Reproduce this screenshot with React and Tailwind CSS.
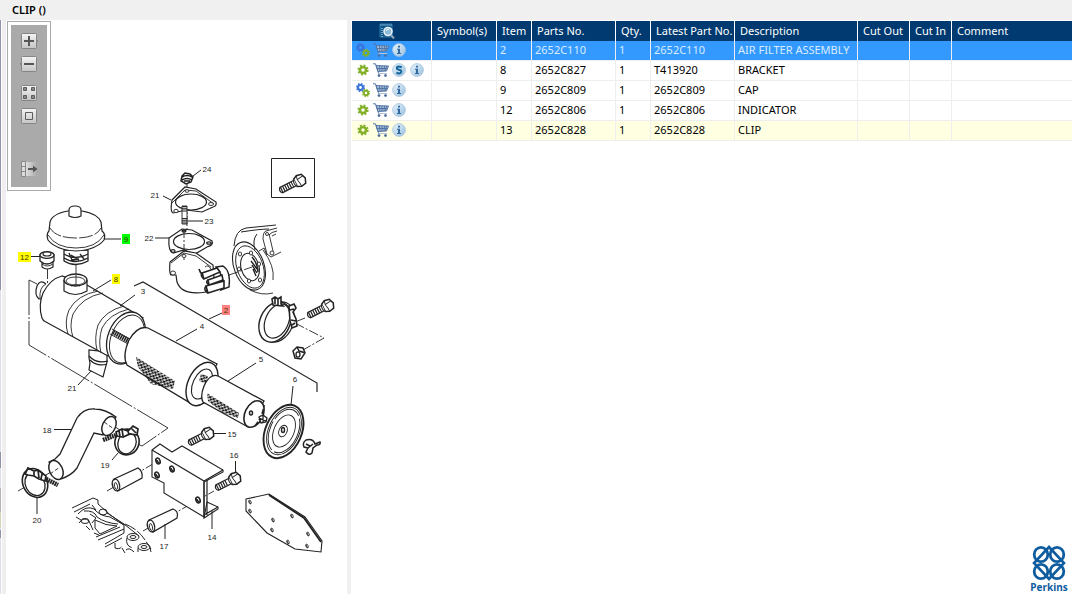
import { useState } from "react";
import clsx from "clsx";

const parts = [
  { item: "2", partNo: "2652C110", qty: 1, latest: "2652C110", description: "AIR FILTER ASSEMBLY", assembly: true },
  { item: "8", partNo: "2652C827", qty: 1, latest: "T413920", description: "BRACKET", superseded: true },
  { item: "9", partNo: "2652C809", qty: 1, latest: "2652C809", description: "CAP", assembly: true },
  { item: "12", partNo: "2652C806", qty: 1, latest: "2652C806", description: "INDICATOR" },
  { item: "13", partNo: "2652C828", qty: 1, latest: "2652C828", description: "CLIP", marked: true },
];

const headings = ["Symbol(s)", "Item", "Parts No.", "Qty.", "Latest Part No.", "Description", "Cut Out", "Cut In", "Comment"];

const Cog = ({ x, y, r, color }) => (
  <g fill="none" stroke={color}>
    <circle cx={x} cy={y} r={r * 0.65} strokeWidth={r * 0.55} />
    <circle cx={x} cy={y} r={r} strokeWidth={r * 0.4} strokeDasharray={`${r * 0.4} ${r * 0.385}`} />
  </g>
);

const GearIcon = ({ assembly }) => (
  <svg width="14" height="14" viewBox="0 0 14 14" aria-hidden="true">
    {assembly ? (
      <>
        <Cog x={4.5} y={4.5} r={3.8} color="#3b73d8" />
        <Cog x={10} y={10} r={3.4} color="#83b027" />
      </>
    ) : (
      <Cog x={7} y={7} r={4.7} color="#83b027" />
    )}
  </svg>
);

const CartIcon = () => (
  <svg width="16" height="14" viewBox="0 0 16 14" fill="none" stroke="#5577a6" aria-hidden="true">
    <path d="M3 2.5 15.5 3 13.5 8 5 8.5Z" fill="#a9bedb" />
    <path d="M0 .8H2.5L5.6 10.5H14M4 5.5H14.5M6.5 3 7 8M9 3V8M11.5 3 11 8M13.5 3 12.5 8" />
    <path d="M5.5 10.5H14" stroke="#b4c3d9" />
    <circle cx="6" cy="12.5" r="1" fill="#41618f" />
    <circle cx="12.5" cy="12.5" r="1" fill="#41618f" />
  </svg>
);

const RoundIcon = ({ kind }) => (
  <svg width="14" height="14" viewBox="0 0 14 14" aria-hidden="true">
    <defs>
      <linearGradient id={`round-${kind}`} x1="0" y1="0" x2="1" y2="1">
        <stop offset="0" stopColor="#eaf5fc" />
        <stop offset="1" stopColor="#97bfdf" />
      </linearGradient>
    </defs>
    <circle cx="7" cy="7" r="6.4" fill={`url(#round-${kind})`} stroke="#a5c3dc" strokeWidth=".8" />
    {kind === "info" ? (
      <path d="M6 2.8H8V4.5H6ZM5 5.8H8V10H9V11H5V10H6V6.8H5Z" fill="#34699f" />
    ) : (
      <path d="M9.7 4.3Q5 2.4 4.8 4.8Q4.8 6.4 7 6.8Q9.4 7.2 9.2 8.9Q8.8 11.3 4.4 9.8" fill="none" stroke="#12649a" strokeWidth="2" />
    )}
  </svg>
);

const ViewIcon = () => (
  <svg width="16" height="16" viewBox="0 0 16 16" fill="none" aria-hidden="true">
    <path d="M1 1H13V14H1Z" fill="#0d5488" stroke="#2f78aa" />
    <path d="M1 2H13" stroke="#6ca6cc" />
    <path d="M3 5V14" stroke="#d6eaf5" strokeDasharray="1 1" />
    <circle cx="9" cy="8.5" r="4" fill="#8dbad7" stroke="#e9f2f8" strokeWidth="1.6" />
    <path d="M7 8Q8 6 10 6.5" stroke="#fff" />
    <path d="m12 12 3 3.5" stroke="#8fa6ba" strokeWidth="2" />
  </svg>
);

const ToolIcon = ({ kind }) => (
  <svg width="20" height="16" viewBox="0 0 20 16" fill="none" aria-hidden="true">
    <defs>
      <linearGradient id="tool-face" x1="0" y1="0" x2="0" y2="1">
        <stop offset="0" stopColor="#f5f5f5" />
        <stop offset="1" stopColor="#c4c4c4" />
      </linearGradient>
      <linearGradient id="tool-fade">
        <stop offset="0" stopColor="#f4f4f4" />
        <stop offset="1" stopColor="#aaa" />
      </linearGradient>
    </defs>
    {kind === "zoomIn" && <path d="m17 6 2 2-2 2" fill="#ddd" stroke="#888" />}
    {kind === "zoomOut" && <path d="M3 6 1 8l2 2" fill="#ddd" stroke="#888" />}
    {kind !== "panel" && <rect x="2.5" y=".5" width="15" height="15" rx="1" fill="url(#tool-face)" stroke="#858585" />}
    {kind === "zoomIn" && <path d="M5 8H15M10 3V13" stroke="#555" strokeWidth="2" />}
    {kind === "zoomOut" && <path d="M5 8H15" stroke="#555" strokeWidth="2" />}
    {kind === "tiles" && <path d="M4.5 2.5H7.5V5.5H4.5ZM12.5 2.5H15.5V5.5H12.5ZM4.5 10.5H7.5V13.5H4.5ZM12.5 10.5H15.5V13.5H12.5Z" fill="#888" stroke="#5c5c5c" />}
    {kind === "fit" && <path d="M6.5 4.5H13.5V11.5H6.5Z" stroke="#5c5c5c" />}
    {kind === "panel" && (
      <>
        <path d="M2 1H18V15H2Z" fill="url(#tool-fade)" />
        <path d="M2.5 .5H6.5V15.5H2.5ZM2.5 5.5H6.5M2.5 10.5H6.5" fill="#ddd" stroke="#888" />
        <path d="M9 8H15" stroke="#555" strokeWidth="2" />
        <path d="M14 4.5 18.500 8 14 11.500Z" fill="#555" />
      </>
    )}
  </svg>
);

const Tool = ({ kind, label }) => (
  <button type="button" title={label} aria-label={label} className="block h-4 w-5 cursor-pointer">
    <ToolIcon kind={kind} />
  </button>
);

const Toolbar = () => (
  <div className="absolute top-0 left-0 mt-px ml-px border border-[#aaaaaa] bg-white p-[3px]">
    <div className="flex h-[162px] w-9 flex-col items-center bg-[#aaaaaa] pt-2">
      <div className="flex flex-col gap-[7px]">
        <Tool kind="zoomIn" label="Zoom in" />
        <Tool kind="zoomOut" label="Zoom out" />
      </div>
      <div className="mt-[13px] flex flex-col gap-[7px]">
        <Tool kind="tiles" label="Tile view" />
        <Tool kind="fit" label="Fit to window" />
      </div>
      <div className="mt-auto mb-[10px]">
        <Tool kind="panel" label="Toggle list" />
      </div>
    </div>
  </div>
);

// Hex bolt lying along the x axis, head at the origin
const Bolt = ({ x, y, length, angle }) => (
  <g transform={`translate(${x} ${y}) rotate(${angle})`}>
    <path d={`M-3 -3H-${length}Q-${length + 3} 0 -${length} 3H-3Z`} strokeWidth="1.2" />
    <path d={`M-${length} 0H-7`} strokeWidth="6" strokeDasharray="1.2 1.2" />
    <path d="M-4 -4 0 -6 5 -5 7 0 5 5 0 6 -4 4Z" strokeWidth="1.5" />
    <path d="M-4 -4Q-7 0 -4 4M0 -6 -1 -2 0 3V6M-1 -2 6 -3" />
  </g>
);

const Hole = ({ x, y, r = 2 }) => (
  <g>
    <ellipse cx={x} cy={y} rx={r} ry={r + 1} transform={`rotate(-20 ${x} ${y})`} />
    <path d={`M${x - 1} ${y - 1}Q${x - 1} ${y + 1} ${x + 1} ${y + 2}`} />
  </g>
);

const callouts = [
  ["24", 207, 172], ["21", 155, 198], ["23", 209, 224], ["22", 149, 241], ["3", 143, 294],
  ["4", 202, 329], ["5", 261, 362], ["6", 295, 382], ["21", 72, 391], ["18", 47, 433],
  ["19", 105, 468], ["20", 37, 523], ["15", 232, 437], ["16", 234, 458], ["14", 212, 540], ["17", 164, 549],
];

const hotspots = [
  { label: "9", x: 122, y: 234, w: 8, fill: "#00ff00" },
  { label: "12", x: 18, y: 252, w: 13, fill: "#ffff00" },
  { label: "8", x: 112, y: 274, w: 8, fill: "#ffff00" },
  { label: "2", x: 222, y: 305, w: 8, fill: "#ff8080" },
];

const Diagram = () => (
  <svg viewBox="6 20 341 540" className="block w-full" fill="#fff" stroke="#222" strokeWidth=".9" role="img" aria-label="Air filter exploded view">
    <defs>
      <pattern id="mesh" width="4" height="4" patternUnits="userSpaceOnUse" patternTransform="rotate(28)">
        <path d="M0 0 4 4M4 0 0 4" stroke="#111" strokeWidth="1.2" />
      </pattern>
    </defs>

    {/* assembly lines */}
    <g fill="none">
      <path d="M134 286 143 282 317 383V392" strokeWidth="1.2" />
      <path d="M37 284 29 280V345L168 428 142 446 122 437" strokeDasharray="44 2 2 2" />
      <path d="M187 184V265M76 265V282M47.5 269V283" strokeDasharray="10 2 2 2" />
      <path d="M229 275 252 267M295 323 324 338 303 350M305 318 295 322" strokeDasharray="10 2 2 2" />
      <path d="M18 491 65 464M102 419 125 433M107 491 158 461M143 531 198 500 214 491" strokeDasharray="9 2 2 2" />
    </g>

    {/* cap */}
    <path d="M64 250V261Q75 268 88 261V250Z" strokeWidth="1.3" />
    <path d="M64 254Q75 261 88 254M64 258Q75 265 88 258M71 255 79 260M80 254 84 259M69 253 72 260 79 259" strokeWidth="1.3" fill="none" />
    <path d="M68 211Q52 214 50 222L49 231Q46 234 48 240Q56 250 76 251Q96 250 104 240Q106 234 102 231L101 222Q98 214 82 211Z" strokeWidth="1.2" />
    <path d="M48 235Q56 248 76 248Q96 248 104 235" fill="none" />
    <path d="M50 228Q56 238 76 238Q96 238 101 228" fill="none" strokeDasharray="14 2" />
    <path d="M69 216V210Q69 206 75 206Q81 206 81 210V216Q75 219 69 216Z" strokeWidth="1.2" />

    {/* indicator */}
    <path d="M42 259V267Q47 271 53 267V259" strokeWidth="1.2" />
    <path d="M42 264Q47 268 53 264" fill="none" />
    <path d="M40 254V261Q47 267 54 261V254" strokeWidth="1.3" />
    <ellipse cx="47" cy="255" rx="7" ry="3.4" strokeWidth="1.2" />
    <ellipse cx="47" cy="254" rx="4" ry="2" strokeWidth="1.2" />

    {/* canister */}
    <path d="M46 284Q40 279 37 286Q34 295 39 299L43 299" strokeWidth="1.2" />
    <path d="M46 284Q39 287 40 299" />
    <path d="M89 350V358L90 363 89 370 103 377 107 362V352Z" strokeWidth="1.2" />
    <path d="M89 356Q96 364 108 361M90 360Q97 367 107 364" fill="none" strokeWidth="1.2" />
    <path d="M62 276Q50 279 43 293Q38 305 42 318Q43 321 46 322L108 356 143 318 87 285Z" strokeWidth="1.2" />
    <path d="M98 291Q77 295 69 310Q64 322 68 334M103 293Q82 297 73 314Q69 326 73 337" fill="none" />
    <path d="M124 306Q105 311 98 325Q94 338 97 350M129 309Q109 314 102 328Q98 341 101 353" fill="none" />
    <ellipse cx="126" cy="338" rx="18" ry="27" transform="rotate(22 126 338)" strokeWidth="1.3" />
    <ellipse cx="127" cy="339" rx="16" ry="25" transform="rotate(22 127 339)" />
    <path d="M113 332 129 341" strokeWidth="5" strokeDasharray="1.6 .6" />
    <path d="M112 329 130 339M110 334 128 344" fill="none" />
    <path d="M64 280V291Q75 298 87 291V280" strokeWidth="1.2" />
    <ellipse cx="75.5" cy="280" rx="11.5" ry="6" strokeWidth="1.3" />
    <ellipse cx="75.5" cy="281" rx="9.5" ry="4" />
    <path d="M71 286Q76 283 80 286M76 275V284" fill="none" />

    {/* outer element */}
    <path d="M148 328Q138 325 129 340Q122 356 127 365L192 404 217 364Z" strokeWidth="1.3" />
    <ellipse cx="202" cy="384" rx="14" ry="23" transform="rotate(25 202 384)" strokeWidth="1.4" />
    <ellipse cx="202" cy="384" rx="9" ry="16" transform="rotate(25 202 384)" strokeWidth="1.1" />
    <path d="M201 374 208 376 206 384 199 381Z" fill="url(#mesh)" stroke="none" />
    <path d="M136 357 175 381 173 389 151 384 138 367Z" fill="url(#mesh)" stroke="none" />

    {/* inner element */}
    <path d="M218 376Q210 373 204 386Q200 396 203 402L248 427 264 401Z" strokeWidth="1.3" />
    <ellipse cx="254" cy="414" rx="9" ry="14" transform="rotate(25 254 414)" strokeWidth="1.6" />
    <path d="M255 426Q263 416 264 405" fill="none" strokeWidth="1.6" strokeDasharray="5 2" />
    <ellipse cx="251" cy="413" rx="1.5" ry="2" strokeWidth="1.5" />
    <path d="M207 393 239 413 238 418 223 413 208 401Z" fill="url(#mesh)" stroke="none" />
    <path d="M259 417 263 415 267 418 266 422 261 423ZM263 415V423M259 418 266 421" strokeWidth="1.3" />

    {/* cover */}
    <ellipse cx="283.5" cy="431.5" rx="18" ry="28" transform="rotate(24 283.5 431.5)" strokeWidth="1.9" />
    <ellipse cx="284" cy="431" rx="15.5" ry="25" transform="rotate(24 284 431)" />
    <ellipse cx="284" cy="431" rx="14" ry="23" transform="rotate(24 284 431)" strokeDasharray="30 3" />
    <ellipse cx="284" cy="431" rx="10" ry="17" transform="rotate(24 284 431)" />
    <ellipse cx="283" cy="431" rx="4" ry="6" transform="rotate(24 283 431)" />
    <ellipse cx="283" cy="430" rx="1.5" ry="2.5" strokeWidth="1.4" />
    <path d="M306 440Q302 443 304 447L308 448 306 452Q309 456 312 453L313 448 317 445Q321 445 320 442L315 444Q313 438 306 440ZM308 448 313 444M306 444 310 446" strokeWidth="1.5" />

    {/* band clamp with bolt and nut */}
    <ellipse cx="278" cy="322" rx="15" ry="21" transform="rotate(24 278 322)" strokeWidth="1.2" />
    <ellipse cx="275" cy="322" rx="15" ry="21" transform="rotate(24 275 322)" strokeWidth="1.4" />
    <ellipse cx="277" cy="321" rx="11.5" ry="18" transform="rotate(24 277 321)" strokeWidth="1.2" />
    <path d="M272 299 275 297 278 299 281 297V304L283 306 273 305ZM275 297V304M278 299V305" strokeWidth="1.6" />
    <path d="M289 306 294 304 296 308 293 312 296 319 297 326 292 328 290 321ZM290 310 294 309M291 320 296 321M292 325 295 323" strokeWidth="1.6" />
    <Bolt x={327} y={306} length={20} angle={-27} />
    <path d="M293 351 297 347 303 348 305 353 301 359 295 358ZM297 347 299 351 305 353M299 351 303 352" strokeWidth="1.5" />
    <ellipse cx="298" cy="354.5" rx="2" ry="2.6" strokeWidth="1.3" />

    {/* gaskets, stud and nut */}
    <path d="M172 200 185 187 196 189 216 202Q217 206 213 207L202 212 186 210 173 213Q170 212 172 200Z" strokeWidth="1.2" />
    <path d="M172 203 185 190 196 191 214 204" fill="none" />
    <ellipse cx="191" cy="202" rx="15.5" ry="8" strokeWidth="1.2" />
    <ellipse cx="187" cy="191" rx="2" ry="1.3" />
    <ellipse cx="211" cy="204" rx="2.5" ry="1.5" />
    <ellipse cx="176" cy="211" rx="2.2" ry="1.7" />
    <path d="M182 176 185 173 190 174 193 177 191 182 186 184 181 181ZM182 177Q187 174 192 177M182 180Q187 177 192 180M184 181H190" strokeWidth="1.5" />
    <path d="M182 206H187V224H182Z" />
    <path d="M184.5 206V212M184.5 218V224" strokeWidth="5" strokeDasharray="1.2 1" />
    <path d="M169 238 182 229 192 230 212 241Q214 245 207 247L195 254 184 250 173 253Q168 251 169 238Z" strokeWidth="1.2" />
    <ellipse cx="189" cy="241.5" rx="15.5" ry="8" strokeWidth="1.2" />
    <ellipse cx="184" cy="231" rx="2" ry="1" strokeWidth="1.3" />
    <ellipse cx="209" cy="243" rx="2.2" ry="1.2" strokeWidth="1.3" />
    <ellipse cx="173" cy="251" rx="2" ry="1.3" strokeWidth="1.3" />

    {/* elbow */}
    <path d="M170 262 184 251 196 253 213 265 214 278 206 292Q182 296 177 282L176 275 171 275Q169 273 170 262Z" strokeWidth="1.2" />
    <path d="M171 263 184 253 196 256 211 267" fill="none" />
    <path d="M184 230V260" fill="none" strokeDasharray="8 2 2 2" />
    <ellipse cx="184" cy="256" rx="2" ry="1.5" />
    <ellipse cx="173" cy="273" rx="2.5" ry="2" />
    <path d="M205 267Q208 264 211 269" fill="none" />
    <path d="M216 267 223 266Q231 271 229 287L221 290Q226 279 216 267Z" strokeWidth="1.4" />
    <path d="M202 273 217 268 220 272 204 279ZM208 280 222 275 223 280 209 285ZM206 286 224 281 224 288 208 293Z" strokeWidth="1.6" />
    <path d="M199 269Q200 273 203 275M202 273Q200 276 204 279M208 280Q205 282 209 285M206 286Q203 290 208 293" fill="none" strokeWidth="1.6" />

    {/* pump housing */}
    <g fill="none">
      <path d="M234 246Q235 230 246 228L276 225M241 232Q260 229 269 229M257 234Q252 240 255 250" strokeWidth="1" />
      <path d="M277 228 266 231Q263 232 263 239L267 254 271 257 281 252M269 234 273 251M269 235Q271 232 277 231M272 236 276 234" />
      <ellipse cx="249" cy="266" rx="15" ry="25" transform="rotate(-20 249 266)" strokeWidth="1.1" />
      <ellipse cx="250" cy="267" rx="13" ry="22" transform="rotate(-20 250 267)" />
      <ellipse cx="250" cy="267" rx="9" ry="14" transform="rotate(-15 250 267)" strokeWidth="1.1" />
      <path d="M252 257Q258 264 258 272M251 261 257 269M252 265 257 273M253 269 256 276" strokeWidth="1.4" />
      <path d="M263 250Q275 266 273 280M259 251 264 248 267 255M250 290Q262 296 273 293" />
    </g>
    {[[240, 254], [251, 253], [259, 264], [260, 280], [249, 281], [239, 269]].map(([x, y]) => (
      <ellipse key={`${x}-${y}`} cx={x} cy={y} rx="1.6" ry="2" />
    ))}
    <circle cx="267" cy="234" r="1.5" />
    <circle cx="272" cy="253" r="2" />

    <path d="M271.5 158.5H314.5V197.5H271.5Z" strokeWidth="1" />
    <Bolt x={299} y={181} length={20} angle={-27} />

    {/* hose and clips */}
    <path d="M49 462 55 459 60 454 77 418Q84 408 95 409Q105 409 116 417L103 435 94 433 77 468Q72 475 61 479Z" strokeWidth="1.3" />
    <ellipse cx="109" cy="426" rx="6.5" ry="10" transform="rotate(25 109 426)" strokeWidth="1.5" />
    <ellipse cx="56" cy="470" rx="6.5" ry="10" transform="rotate(-25 56 470)" strokeWidth="1.5" />
    <path d="M104 422 114 429M50 474 60 467" strokeDasharray="4 2" />
    <ellipse cx="127" cy="442" rx="12" ry="13" transform="rotate(20 127 442)" strokeWidth="1.6" />
    <ellipse cx="127" cy="443" rx="9" ry="11" transform="rotate(20 127 443)" strokeWidth="1.3" />
    <path d="M103 440 119 434" strokeWidth="4.5" strokeDasharray="1.8 .6" />
    <path d="M116 432 122 429 128 431 133 426 138 429 137 435 130 434 123 437 117 436ZM122 429 123 436M128 431 129 435M131 428 136 433M119 431 120 436" strokeWidth="1.7" />
    <ellipse cx="35" cy="483" rx="12" ry="15" transform="rotate(-28 35 483)" strokeWidth="1.6" />
    <ellipse cx="35" cy="484" rx="9.5" ry="12" transform="rotate(-28 35 484)" strokeWidth="1.3" />
    <path d="M44 478 58 485" strokeWidth="4.5" strokeDasharray="1.8 .6" />
    <path d="M25 474 28 468 34 471 38 470 46 476 45 481 39 479 34 476 28 475ZM34 471V476M38 470 39 478M42 474 41 479" strokeWidth="1.7" />

    {/* spacers */}
    <path d="M114 479 138 468Q143 471 142 478L118 491Z" strokeWidth="1.2" />
    <ellipse cx="116" cy="485" rx="3.5" ry="6" transform="rotate(-15 116 485)" strokeWidth="1.4" />
    <ellipse cx="116" cy="486" rx="1.5" ry="3.5" transform="rotate(-15 116 486)" />
    <path d="M149 520 173 509Q179 511 177 518L153 532Z" strokeWidth="1.2" />
    <ellipse cx="151" cy="526" rx="3.5" ry="6" transform="rotate(-15 151 526)" strokeWidth="1.4" />
    <ellipse cx="151" cy="527" rx="1.5" ry="3.5" transform="rotate(-15 151 527)" />

    {/* bracket and plate */}
    <path d="M207 502 218 507V509L204 518Z" strokeWidth="1.1" />
    <path d="M152 450 160 444 172 452 182 446 223 470V472L204 482 204 517 164 493V483L152 477Z" strokeWidth="1.1" />
    <path d="M152 450 204 481 223 470M204 481V517M207 480V515M204 515 218 507" fill="none" strokeWidth="1.2" />
    {[[158, 461], [157, 475], [172, 469], [198, 500]].map(([x, y]) => (
      <g key={`${x}-${y}`} strokeWidth="1.6"><Hole x={x} y={y} /></g>
    ))}
    <Bolt x={207} y={434} length={19} angle={-27} />
    <Bolt x={234} y={479} length={19} angle={-27} />
    <path d="M246 499 269 494 305 517 322 541 321 552 295 549 267 533 246 511Z" strokeWidth="1.1" />
    <path d="M269 495 304 518 321 542" fill="none" strokeWidth="1.8" />
    {[[250, 502], [250, 511], [273, 520], [272, 530], [292, 516], [308, 534], [288, 542], [307, 546]].map(([x, y]) => (
      <Hole key={`${x}-${y}`} x={x} y={y} r={1} />
    ))}

    {/* cylinder head corner */}
    <g fill="none" strokeWidth="1">
      <path d="M72 508 93 498 98 500V504M74 512 90 504M78 514Q86 505 94 509Q100 516 110 517L124 525V533L105 544M98 504Q108 514 124 525M84 511Q94 510 97 517Q105 523 118 524M96 537 120 527M98 540 124 529M105 547 122 538" />
      <path d="M76 517 81 520M79 523Q84 516 89 521L93 530M90 514 96 518 92 523M86 526 90 530M95 520Q106 526 117 526L100 534 95 528ZM94 533 99 535M92 505 96 510M107 513 124 524 139 536" />
      <path d="M125 524Q138 529 145 540L151 549M127 538Q125 546 133 548M115 543V548Q120 550 122 546M122 548 125 553" strokeDasharray="12 2" />
      <ellipse cx="103" cy="512" rx="4" ry="3" />
      <ellipse cx="85" cy="521" rx="4" ry="2.5" />
      <ellipse cx="133" cy="537" rx="6" ry="3.5" />
      <ellipse cx="133" cy="537" rx="3" ry="1.5" />
      <ellipse cx="144" cy="547" rx="6" ry="3.5" />
      <ellipse cx="144" cy="547" rx="3" ry="1.5" />
      <path d="M138 548V552M150 548 151 552M126 550Q129 547 134 552" />
    </g>

    {/* leader lines */}
    <path d="M193 176 201 170M163 196 171 200M188 221H203M155 238H169M104 239H121M31 256.5H40M111 280 93 291M135 295 120 306M222 313 209 319M197 329 176 341M256 363 228 381M293 386 291 405M78 385 91 371M54 429.5H72M112 460 118 453M37 497V514M213 433.5H226M235.5 461V472M212 511V529M165 524V539" fill="none" strokeWidth="1" />

    <g stroke="none" fill="#222" textAnchor="middle" fontFamily="'Liberation Sans', Arial, sans-serif" fontSize="8">
      {callouts.map(([label, x, y]) => (
        <text key={`${label}-${x}`} x={x} y={y}>{label}</text>
      ))}
      {hotspots.map((h) => (
        <g key={h.label}>
          <rect x={h.x} y={h.y} width={h.w} height="10" fill={h.fill} />
          <text x={h.x + h.w / 2} y={h.y + 8} fill="#443300">{h.label}</text>
        </g>
      ))}
    </g>
  </svg>
);

const PartActions = ({ part }) => (
  <div className="flex items-center pl-[2px]">
    <button type="button" aria-label="Part details" className="flex w-[18px] justify-center">
      <GearIcon assembly={part.assembly} />
    </button>
    <button type="button" aria-label="Add to cart" className="flex w-[18px] justify-center">
      <CartIcon />
    </button>
    {part.superseded && (
      <button type="button" aria-label="Supersession" className="flex w-[18px] justify-center">
        <RoundIcon kind="super" />
      </button>
    )}
    <button type="button" aria-label="Information" className="flex w-[18px] justify-center">
      <RoundIcon kind="info" />
    </button>
  </div>
);

const PartsTable = () => {
  const [selected, setSelected] = useState("2");

  return (
    <table className="w-full table-fixed border-separate border-spacing-0 text-left text-[11px] leading-4">
      <colgroup>
        <col className="w-20" />
        <col className="w-[65px]" />
        <col className="w-[35px]" />
        <col className="w-[84px]" />
        <col className="w-[35px]" />
        <col className="w-[84px]" />
        <col className="w-[123px]" />
        <col className="w-[52px]" />
        <col className="w-[42px]" />
        <col />
      </colgroup>
      <thead>
        <tr className="h-5 bg-[#003a70] text-white">
          <th className="border-r border-white p-0">
            <div className="flex justify-center pr-[10px]">
              <ViewIcon />
            </div>
          </th>
          {headings.map((heading) => (
            <th key={heading} className="border-r border-white p-0 pl-[5px] font-normal whitespace-nowrap last:border-r-0">
              {heading}
            </th>
          ))}
        </tr>
      </thead>
      <tbody>
        {parts.map((part) => {
          const active = part.item === selected;
          const cells = ["", part.item, part.partNo, part.qty, part.latest, part.description, "", "", ""];
          return (
            <tr
              key={part.item}
              onClick={() => setSelected(part.item)}
              className={clsx("h-5", active ? "bg-[#3399ff] text-[#d9ecff]" : "text-black", !active && part.marked && "bg-[#ffffe1]")}
            >
              <td className="border-r border-b border-[#eeeeee] p-0 pb-[2px]">
                <PartActions part={part} />
              </td>
              {cells.map((cell, i) => (
                <td key={i} className="border-r border-b border-[#eeeeee] p-0 pb-[2px] pl-[3px] whitespace-nowrap last:border-r-0">
                  {cell}
                </td>
              ))}
            </tr>
          );
        })}
      </tbody>
    </table>
  );
};

const PerkinsLogo = () => (
  <div className="flex w-10 flex-col items-center text-[#0f5c9f]">
    <svg width="34" height="36" viewBox="0 0 34 36" fill="none" stroke="currentColor" strokeWidth="2.8" aria-hidden="true">
      <ellipse cx="9" cy="9.5" rx="6.8" ry="7.2" />
      <ellipse cx="25" cy="9.5" rx="6.8" ry="7.2" />
      <ellipse cx="9" cy="26.5" rx="6.8" ry="7.2" />
      <ellipse cx="25" cy="26.5" rx="6.8" ry="7.2" />
      <path d="M17 2 32 18 17 34 2 18Z" strokeWidth="2.6" />
    </svg>
    <span className="text-[10px] leading-3 font-bold">Perkins</span>
  </div>
);

const EdgeStrip = () => (
  <div className="flex w-[6px] shrink-0 bg-[#f0eeee]">
    <div className="flex w-px flex-col bg-[#dddde8]">
      <div className="h-[270px] bg-[#9292aa]" />
      <div className="mt-[162px] h-4 bg-[#9292aa]" />
      <div className="mt-5 h-6 bg-[#b5b5b5]" />
      <div className="h-4 bg-[#d4d4b8]" />
      <div className="mt-[2px] h-2 bg-[#9292aa]" />
    </div>
    <div className="w-px bg-white" />
  </div>
);

export default function App() {
  return (
    <div className="flex h-screen flex-col overflow-hidden bg-white font-['Noto_Sans','Open_Sans',sans-serif] text-black">
      <header className="h-5 shrink-0 bg-[#f0f0f0] pl-3">
        <h1 className="text-[11px] leading-5 font-semibold">CLIP ()</h1>
      </header>
      <div className="flex min-h-0 flex-1">
        <EdgeStrip />
        <section className="relative w-[341px] shrink-0 overflow-hidden">
          <Diagram />
          <Toolbar />
        </section>
        <div className="w-1 shrink-0 bg-[#f0f0f0]" />
        <main className="flex min-w-0 flex-1 flex-col pt-px pl-px">
          <PartsTable />
          <div className="mt-auto flex justify-end pr-[3px] pb-px">
            <PerkinsLogo />
          </div>
        </main>
      </div>
    </div>
  );
}
